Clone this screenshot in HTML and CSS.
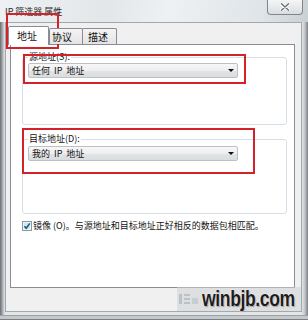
FILE: index.html
```html
<!DOCTYPE html>
<html lang="zh-CN">
<head>
<meta charset="utf-8">
<title>IP 筛选器 属性</title>
<link rel="stylesheet" href="styles.css">
</head>
<body>
<div class="window">
  <div class="titlebar">
    <span class="title">IP 筛选器 属性</span>
    <div class="close">
      <svg width="10" height="8" viewBox="0 0 10 8"><path d="M1.5 0.8 L8.5 7.2 M8.5 0.8 L1.5 7.2" stroke="#fff" stroke-width="3" stroke-linecap="round"/><path d="M1.5 0.8 L8.5 7.2 M8.5 0.8 L1.5 7.2" stroke="#6a6e73" stroke-width="1.4" stroke-linecap="round"/></svg>
    </div>
  </div>
  <div class="client">
    <div class="tabs">
      <div class="tab sel">地址</div>
      <div class="tab t2">协议</div>
      <div class="tab t3">描述</div>
    </div>
    <div class="panel">
      <fieldset class="group g1">
        <legend>源地址(S):</legend>
        <div class="combo"><span class="combo-text">任何 IP 地址</span><i class="arrow"></i></div>
      </fieldset>
      <fieldset class="group g2">
        <legend>目标地址(D):</legend>
        <div class="combo"><span class="combo-text">我的 IP 地址</span><i class="arrow"></i></div>
      </fieldset>
      <div class="check">
        <svg class="box" width="10" height="10" viewBox="0 0 10 10"><rect x="0.5" y="0.5" width="9" height="9" fill="#c6e9f3" stroke="#8c9aa3"/><rect x="1.5" y="1.5" width="7" height="7" fill="none" stroke="#e6f6fa"/><path d="M2.4 5.2 L4.2 7.2 L7.8 2.4" fill="none" stroke="#24506c" stroke-width="1.5"/></svg>
        <span>镜像 (O)。与源地址和目标地址正好相反的数据包相匹配。</span>
      </div>
    </div>
  </div>
  <div class="mark m1"></div>
  <div class="mark m2"></div>
  <div class="mark m3"></div>
  <div class="wm">
    <svg class="wm-icon" width="22" height="14" viewBox="0 0 22 14"><rect x="1" y="2" width="3" height="10" fill="#b9c2c8"/><rect x="6" y="2" width="6" height="2" fill="#b9c2c8"/><rect x="6" y="6" width="6" height="2" fill="#b9c2c8"/><rect x="6" y="10" width="6" height="2" fill="#b9c2c8"/><rect x="14" y="6" width="6" height="6" fill="#c7cdd1"/></svg>
    <span class="wm-text">winbjb.com</span>
  </div>
</div>
</body>
</html>
```
FILE: styles.css
```css
* { box-sizing: border-box; }
html, body { margin: 0; padding: 0; }
body {
  width: 308px;
  height: 320px;
  overflow: hidden;
  font-family: "Noto Sans CJK SC", "Noto Sans", sans-serif;
  font-size: 9px;
  color: #111;
}
.window {
  position: relative;
  width: 308px;
  height: 320px;
  display: flex;
  flex-direction: column;
  background: linear-gradient(90deg, #6a6d70 0, #9c9fa3 2px, #cdd2d6 4px, #e2e6e9 5px, #e2e6e9 302px, #bfc3c7 305px, #7b7e81 308px);
  box-shadow: inset 0 -1px 0 #7d8083, inset 0 -4px 0 #c4c8cb, inset 0 -5px 0 #9ea2a5;
}
.titlebar {
  height: 22px;
  flex: none;
  display: flex;
  justify-content: space-between;
  align-items: flex-start;
  padding: 0 5px 0 5px;
  background: linear-gradient(100deg, #eef1f3 0, #e3e7ea 35%, #eef1f3 55%, #dfe4e8 85%, #c9d0d4 100%);
}
.title {
  margin-top: 7px;
  font-size: 9px;
  line-height: 10px;
  color: #2a2a2a;
}
.close {
  width: 36px;
  height: 15px;
  border: 1px solid #80868c;
  border-top: 0;
  border-radius: 0 0 4px 4px;
  background: linear-gradient(#f4f5f6, #dadde0);
  display: flex;
  align-items: center;
  justify-content: center;
}
.client {
  flex: 1;
  margin: 0 6px 8px 5px;
  background: #f0f0f0;
  border: 1px solid #a3a8ad;
  padding: 3px 6px 23px 4px;
  display: flex;
  flex-direction: column;
}
.tabs {
  display: flex;
  align-items: flex-end;
  position: relative;
  z-index: 1;
}
.tab {
  height: 16px;
  font-size: 10px;
  line-height: 15px;
  border: 1px solid #898c95;
  border-bottom: 0;
  border-radius: 2px 2px 0 0;
  background: linear-gradient(#f4f4f4, #e4e4e4);
}
.tab.sel {
  width: 41px;
  height: 19px;
  margin-left: -2px;
  margin-bottom: -1px;
  padding-left: 8px;
  line-height: 15px;
  padding-top: 1px;
  background: #fff;
}
.tab.t2 { width: 34px; padding-left: 2px; }
.tab.t3 { width: 35px; margin-left: -1px; padding-left: 5px; }
.panel {
  flex: 1;
  background: #fff;
  border: 1px solid #898c95;
  padding: 7px 7px 0 11px;
  display: flex;
  flex-direction: column;
}
.group {
  margin: 0;
  min-width: 0;
  border: 1px solid #d5dfe5;
  border-radius: 3px;
  padding: 1px 0 0 5px;
}
.group legend {
  padding: 0 1px;
  margin: 0;
  font-size: 9px;
  line-height: 10px;
}
.g1 { padding-bottom: 46px; }
.g2 { margin-top: 9px; padding-top: 2px; padding-bottom: 52px; }
.combo {
  width: 210px;
  height: 15px;
  border: 1px solid #bdc0c4;
  border-radius: 2px;
  background: linear-gradient(#f7f7f7, #eeeeee 50%, #e2e4e5 51%, #dadddf);
  display: flex;
  align-items: center;
  justify-content: space-between;
  padding: 0 3px 0 3px;
  font-size: 9px;
  line-height: 10px;
}
.combo-text { word-spacing: 2px; }
.arrow {
  width: 0;
  height: 0;
  border-left: 3px solid transparent;
  border-right: 3px solid transparent;
  border-top: 3px solid #111;
}
.check {
  margin-top: 7px;
  display: flex;
  align-items: center;
  gap: 1px;
  line-height: 10px;
}
.box { flex: none; }
.mark {
  position: absolute;
  border: 2px solid #d3222a;
}
.m1 { left: 6px; top: 13px; width: 53px; height: 36px; }
.m2 { left: 23px; top: 54px; width: 223px; height: 30px; }
.m3 { left: 22px; top: 128px; width: 233px; height: 46px; }
.wm {
  position: absolute;
  left: 177px;
  top: 287px;
  width: 124px;
  height: 24px;
  background: rgba(205, 209, 212, 0.55);
  display: flex;
  align-items: center;
  padding-left: 1px;
}
.wm-icon { flex: none; }
.wm-text {
  display: inline-block;
  font-family: "Liberation Sans", Arial, sans-serif;
  font-weight: bold;
  font-size: 22px;
  line-height: 22px;
  color: #1c1c1c;
  letter-spacing: -0.5px;
  transform: scaleX(0.8);
  transform-origin: left center;
  margin-left: 2px;
  text-shadow: 0 0 2px #fff, 0 0 1px #fff, 1px 1px 1px #888;
}
```
